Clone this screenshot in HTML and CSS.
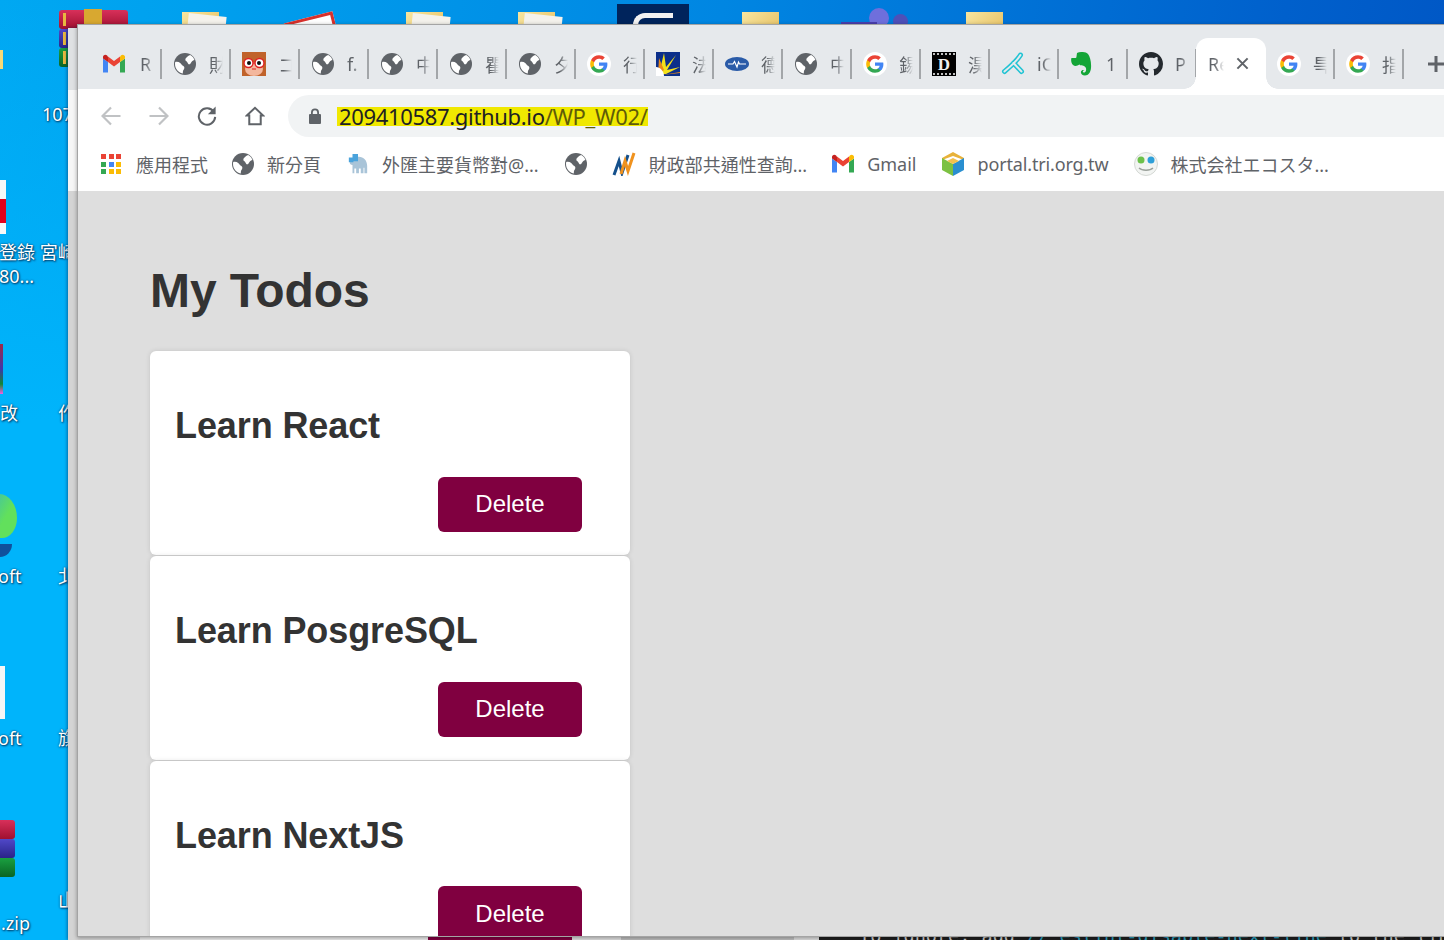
FILE: index.html
```html
<!DOCTYPE html>
<html lang="en">
<head>
    <meta charset="UTF-8">
    <title>React App</title>
    <link rel="stylesheet" href="styles.css">
</head>
<body>

<svg class="sprites" width="0" height="0">
    <symbol id="globe" viewBox="0 0 24 24">
        <circle cx="12" cy="12" r="11" fill="#5f6368"/>
        <path fill="#fff" d="M2.200 10c2-.4 3.800 0 5 1 1.200 1 1.500 2 2.800 2.800 1 .7 1.500 1.200 1.300 2.400-.2 1-1 1.800-1.300 2.800-.2.800-.2 1.500-.1 2.600-2.800-.6-5-2.200-6.500-4.600C2.200 15 1.700 12.500 2.200 10z"/>
        <path fill="#fff" d="M13 6c1-1.300 2.500-2.500 4.200-3.100 2 1.100 3.500 2.800 4.300 5-1.300.2-2.300.9-3 2-.8 1.100-1.100 2.400-2.200 2.400-1.300 0-1.400-1.600-2.200-2.400-.7-.7-1.700-.8-1.700-1.800 0-.8 0-1.300.6-2.100z"/>
    </symbol>
    <symbol id="gmail" viewBox="0 0 24 24">
        <path fill="#4285f4" d="M1 20.500h5V10L1 6.500z"/>
        <path fill="#34a853" d="M18 20.500h5V6.500L18 10z"/>
        <path fill="#ea4335" d="M6 10V4.500l6 4.500 6-4.500V10l-6 4.500z"/>
        <path fill="#fbbc04" d="M18 4.500V10l5-3.500V5c0-2-2.300-3-3.800-1.800z"/>
        <path fill="#c5221f" d="M1 6.500 6 10V4.500L4.800 3.200C3.300 2 1 3 1 5z"/>
    </symbol>
    <symbol id="google" viewBox="0 0 24 24">
        <circle cx="12" cy="12" r="12" fill="#fff"/>
        <path fill="#4285f4" d="M20.400 12.200c0-.6-.1-1.200-.2-1.700H12v3.300h4.700c-.2 1.100-.8 2-1.800 2.600v2.200h2.900c1.700-1.500 2.600-3.800 2.600-6.400z"/>
        <path fill="#34a853" d="M12 20.800c2.400 0 4.400-.8 5.800-2.200l-2.900-2.200c-.8.500-1.800.9-2.900.9-2.300 0-4.200-1.500-4.900-3.600h-3v2.300c1.500 2.900 4.500 4.800 7.900 4.800z"/>
        <path fill="#fbbc05" d="M7.100 13.700c-.4-1.100-.4-2.300 0-3.400V8H4.100c-1.200 2.500-1.200 5.500 0 8z"/>
        <path fill="#ea4335" d="M12 6.700c1.300 0 2.400.4 3.300 1.300l2.500-2.500C16.300 4 14.300 3.200 12 3.200 8.600 3.200 5.600 5.100 4.100 8l3 2.300c.7-2.100 2.600-3.600 4.900-3.600z"/>
    </symbol>
</svg>

<div class="desktop">
    <!-- icons on the desktop, most are hidden by the browser -->
    <div class="rar rar-top"><i class="rar-red"></i><i class="rar-blue"></i><i class="rar-green"></i><b></b></div>
    <div class="folder f1"></div>
    <div class="sheet"></div>
    <div class="folder f2"></div>
    <div class="folder f3"></div>
    <div class="tile"><span></span></div>
    <div class="folder f4"></div>
    <div class="teams"><i class="t-big"></i><i class="t-small"></i><i class="t-body"></i></div>
    <div class="folder f5"></div>
    <div class="sliver-folder"></div>

    <div class="pdf"><i></i></div>
    <div class="thumb"></div>
    <div class="orb"></div>
    <div class="orb-tail"></div>
    <div class="doc"></div>
    <div class="rar rar-low"><i class="rar-red"></i><i class="rar-blue"></i><i class="rar-green"></i></div>

    <span class="label l1">107</span>
    <span class="label l2">登錄 宮崎</span>
    <span class="label l3">80...</span>
    <span class="label l4">改</span>
    <span class="label l5">作</span>
    <span class="label l6">oft</span>
    <span class="label l7">北</span>
    <span class="label l8">oft</span>
    <span class="label l9">旗</span>
    <span class="label l10">.zip</span>
    <span class="label l11">山</span>

    <!-- windows behind the browser -->
    <div class="back-window"></div>
    <div class="back-strip">
        <div class="strip-a"></div>
        <div class="strip-b"></div>
        <div class="strip-c"></div>
        <div class="strip-d"></div>
        <div class="strip-e"></div>
        <div class="strip-term"><code>To ignore, add <em>// eslint-disable-next-line</em> to the line before.</code></div>
    </div>

    <div class="browser">
        <div class="tabs">
            <div class="tab tab-first"><svg class="fav"><use href="#gmail"/></svg><span class="tab-title">R</span></div>
            <div class="tab"><svg class="fav"><use href="#globe"/></svg><span class="tab-title">財</span></div>
            <div class="tab">
                <svg class="fav" viewBox="0 0 24 24">
                    <rect width="24" height="24" fill="#c0622a"/>
                    <ellipse cx="12" cy="17" rx="9" ry="7" fill="#f3b79d"/>
                    <circle cx="6.500" cy="11" r="4.500" fill="#fff" stroke="#e02020" stroke-width="1.400"/>
                    <circle cx="17.500" cy="11" r="4.500" fill="#fff" stroke="#e02020" stroke-width="1.400"/>
                    <circle cx="7" cy="11" r="2" fill="#111"/>
                    <circle cx="17" cy="11" r="2" fill="#111"/>
                    <path d="M11 11h2M10 17h4" stroke="#e02020" stroke-width="1"/>
                </svg>
                <span class="tab-title">コ</span>
            </div>
            <div class="tab"><svg class="fav"><use href="#globe"/></svg><span class="tab-title">f.</span></div>
            <div class="tab"><svg class="fav"><use href="#globe"/></svg><span class="tab-title">中</span></div>
            <div class="tab"><svg class="fav"><use href="#globe"/></svg><span class="tab-title">瞿</span></div>
            <div class="tab"><svg class="fav"><use href="#globe"/></svg><span class="tab-title">夕</span></div>
            <div class="tab"><svg class="fav"><use href="#google"/></svg><span class="tab-title">行</span></div>
            <div class="tab">
                <svg class="fav" viewBox="0 0 24 24">
                    <rect width="24" height="24" fill="#0b2f8a"/>
                    <path fill="#f5e11a" d="M3 22 8 1l2 14L20 3 11 18l13-3-14 7z"/>
                    <path fill="#e8891c" d="M2 23 3 6l5 12zM6 23l18-3v1z"/>
                    <path fill="#fff" d="M0 15c4 0 8 4 8 9H0z"/>
                </svg>
                <span class="tab-title">法</span>
            </div>
            <div class="tab">
                <svg class="fav" viewBox="0 0 24 24">
                    <ellipse cx="12" cy="12" rx="12" ry="7" fill="#2a5ba8"/>
                    <path d="M3 12h5l1.500-2.500L12 15l1.500-5 1 2H21" fill="none" stroke="#fff" stroke-width="1.200"/>
                </svg>
                <span class="tab-title">德</span>
            </div>
            <div class="tab"><svg class="fav"><use href="#globe"/></svg><span class="tab-title">中</span></div>
            <div class="tab"><svg class="fav"><use href="#google"/></svg><span class="tab-title">錫</span></div>
            <div class="tab">
                <svg class="fav" viewBox="0 0 24 24">
                    <rect width="24" height="24" fill="#000"/>
                    <path d="M1 2h22M1 22h22" stroke="#fff" stroke-width="1.500" stroke-dasharray="2 2"/>
                    <text x="12" y="18" class="film-d">D</text>
                </svg>
                <span class="tab-title">淏</span>
            </div>
            <div class="tab">
                <svg class="fav" viewBox="0 0 24 24">
                    <g fill="none" stroke-linecap="round">
                        <path d="M19.500 3C16 9 10 14 3.500 19.500M12.500 11 20.500 19.500" stroke="#1fc3d3" stroke-width="5"/>
                        <path d="M19.500 3C16 9 10 14 3.500 19.500M12.500 11 20.500 19.500" stroke="#e6e9ec" stroke-width="2"/>
                    </g>
                </svg>
                <span class="tab-title">iC</span>
            </div>
            <div class="tab">
                <svg class="fav" viewBox="0 0 24 24">
                    <path fill="#14a537" d="M7 1c3-1.500 9-1.500 11 1 2 2.500 3.500 8 3 14-.3 4-2.500 7.500-6 7.500-3 0-4.500-2-4-4 .4-1.500 2.500-2 3.500-1-1 0-2 .5-1.500 1.500.6 1 2.500.8 3-1.500.4-2 0-3.500-2-4.500-2-.8-3.500-.3-4.500-1.500C6 15 2.500 14 1.500 10.500 1 8.500 1 7 1.500 6H5c1 0 1.500-.5 1.500-1.500z"/>
                </svg>
                <span class="tab-title">1</span>
            </div>
            <div class="tab">
                <svg class="fav" viewBox="0 0 16 16">
                    <path fill="#24292e" d="M8 0C3.580 0 0 3.580 0 8c0 3.540 2.290 6.530 5.470 7.590.4.070.55-.17.550-.38 0-.19-.01-.82-.01-1.490-2.010.370-2.530-.49-2.690-.94-.09-.23-.48-.94-.82-1.130-.28-.15-.68-.52-.01-.53.630-.01 1.080.58 1.230.82.720 1.210 1.870.87 2.330.66.070-.52.280-.87.510-1.070-1.780-.2-3.640-.89-3.640-3.950 0-.87.310-1.590.82-2.150-.08-.2-.36-1.020.08-2.120 0 0 .67-.21 2.200.82.640-.18 1.320-.27 2-.27s1.360.09 2 .27c1.530-1.040 2.200-.82 2.200-.82.440 1.100.16 1.920.08 2.120.51.560.82 1.270.82 2.150 0 3.070-1.870 3.750-3.650 3.950.29.250.54.730.54 1.480 0 1.070-.01 1.930-.01 2.200 0 .21.150.46.550.38A8.013 8.013 0 0 0 16 8c0-4.420-3.580-8-8-8z"/>
                </svg>
                <span class="tab-title">P</span>
            </div>
            <div class="tab tab-active">
                <span class="tab-title">Re</span>
                <svg class="tab-close" viewBox="0 0 14 14"><path d="M1.500 1.500l11 11M12.500 1.500l-11 11"/></svg>
            </div>
            <div class="tab tab-after"><svg class="fav"><use href="#google"/></svg><span class="tab-title">특</span></div>
            <div class="tab"><svg class="fav"><use href="#google"/></svg><span class="tab-title">指</span></div>
            <svg class="new-tab" viewBox="0 0 16 16"><path d="M8 0v16M0 8h16"/></svg>
        </div>

        <div class="toolbar">
            <svg class="nav nav-off" viewBox="0 0 20 20"><path d="M19.500 10H2M10 1.500 1.500 10l8.500 8.500"/></svg>
            <svg class="nav nav-off" viewBox="0 0 20 20"><path d="M.5 10H18M10 1.500l8.500 8.500-8.500 8.500"/></svg>
            <svg class="nav" viewBox="0 0 22 22">
                <path d="M18.500 6.500A9 9 0 1 0 20 12"/>
                <path class="solid" d="M20.500 .5v8.500H12z"/>
            </svg>
            <svg class="nav" viewBox="0 0 20 22"><path d="M1 10.500 10 2l9 8.500h-2.700V20H3.700v-9.500z"/></svg>
            <div class="omnibox">
                <svg class="lock" viewBox="0 0 12 16">
                    <path d="M2 6V4.500a4 4 0 0 1 8 0V6h1a1 1 0 0 1 1 1v8a1 1 0 0 1-1 1H1a1 1 0 0 1-1-1V7a1 1 0 0 1 1-1zm1.800 0h4.400V4.500a2.200 2.200 0 0 0-4.400 0z"/>
                </svg>
                <span class="url"><mark>209410587.github.io<span class="url-path">/WP_W02/</span></mark></span>
            </div>
        </div>

        <div class="bookmarks">
            <div class="bm bm-apps">
                <div class="apps">
                    <i class="r"></i><i class="r"></i><i class="r"></i>
                    <i class="g"></i><i class="b"></i><i class="y"></i>
                    <i class="g"></i><i class="y"></i><i class="y"></i>
                </div>
                <span>應用程式</span>
            </div>
            <div class="bm bm-new"><svg class="fav"><use href="#globe"/></svg><span>新分頁</span></div>
            <div class="bm bm-fx">
                <svg class="fav" viewBox="0 0 24 24">
                    <path fill="#a9c4d8" d="M6 9c0-3 3-5 7-5 5 0 9 4 9 10v8h-3v-6h-1v6h-3v-5h-2v5H10v-5H8v5H6v-9c-2 0-3-1-3-3z"/>
                    <path fill="#4aa3dc" d="M6 1h6v8H6zM2 5h5v5H2z"/>
                </svg>
                <span>外匯主要貨幣對@...</span>
            </div>
            <div class="bm bm-globe"><svg class="fav"><use href="#globe"/></svg></div>
            <div class="bm bm-mof">
                <svg class="fav" viewBox="0 0 24 24">
                    <path d="M2 23 7 9l3 12 6-18" fill="none" stroke="#14508c" stroke-width="3"/>
                    <path d="M9 22 13 9l3 10 6-18" fill="none" stroke="#f0921e" stroke-width="3"/>
                </svg>
                <span>財政部共通性查詢...</span>
            </div>
            <div class="bm bm-gmail"><svg class="fav"><use href="#gmail"/></svg><span>Gmail</span></div>
            <div class="bm bm-portal">
                <svg class="fav" viewBox="0 0 24 24">
                    <path fill="#e8b23a" d="M12 0 23 6v2L12 4 1 8V6z"/>
                    <path fill="#7cc142" d="M1 6l11 6v12L1 18z"/>
                    <path fill="#2a8fd0" d="M23 6 12 12v12l11-6z"/>
                    <path fill="#f2c14e" d="M12 6l6 3-6 3-6-3z"/>
                </svg>
                <span>portal.tri.org.tw</span>
            </div>
            <div class="bm bm-eco">
                <svg class="fav" viewBox="0 0 24 24">
                    <circle cx="12" cy="12" r="11.500" fill="#f2f4f2" stroke="#d4d8d4"/>
                    <circle cx="7" cy="8" r="3.500" fill="#6cc04a"/>
                    <circle cx="17" cy="8" r="3.500" fill="#2e9fd8"/>
                    <path d="M5 16c3 3 11 3 14 0" fill="none" stroke="#9aa09a" stroke-width="1.400"/>
                </svg>
                <span>株式会社エコスタ...</span>
            </div>
        </div>

        <div class="page">
            <h1>My Todos</h1>
            <div class="todo">
                <h2>Learn React</h2>
                <div class="todo-actions"><button class="btn">Delete</button></div>
            </div>
            <div class="todo">
                <h2>Learn PosgreSQL</h2>
                <div class="todo-actions"><button class="btn">Delete</button></div>
            </div>
            <div class="todo">
                <h2>Learn NextJS</h2>
                <div class="todo-actions"><button class="btn">Delete</button></div>
            </div>
        </div>
    </div>
</div>

</body>
</html>
```

FILE: styles.css
```css
* {
    box-sizing: border-box;
}
html, body {
    margin: 0;
    height: 100%;
    overflow: hidden;
}
body {
    font-family: "Noto Sans", "Noto Sans CJK TC", sans-serif;
}
.sprites {
    position: absolute;
}

/* desktop */
.desktop {
    position: relative;
    width: 1444px;
    height: 940px;
    overflow: hidden;
    background: linear-gradient(100deg, #00a8f2 0%, #00a0ee 12%, #0086e2 45%, #0060cc 80%, #0050c0 100%);
}
.desktop::before {
    content: "";
    position: absolute;
    left: 0;
    top: 0;
    width: 70px;
    bottom: 0;
    background: linear-gradient(rgba(0, 180, 251, 0), #00b4fb 420px);
}
.label {
    position: absolute;
    color: #fff;
    font-size: 18px;
    line-height: 24px;
    white-space: nowrap;
    text-shadow: 1px 1px 2px #003a66, 0 0 2px #003a66;
}
.l1 { left: 42px; top: 102px; }
.l2 { left: -1px; top: 240px; }
.l3 { left: -1px; top: 264px; }
.l4 { left: 0; top: 401px; }
.l5 { left: 58px; top: 401px; }
.l6 { left: -2px; top: 564px; }
.l7 { left: 58px; top: 564px; }
.l8 { left: -2px; top: 726px; }
.l9 { left: 58px; top: 726px; }
.l10 { left: 1px; top: 911px; }
.l11 { left: 58px; top: 888px; }

.rar {
    position: absolute;
    display: flex;
    flex-direction: column;
}
.rar i {
    display: block;
    height: 19px;
    border-radius: 3px;
}
.rar-red { background: linear-gradient(#d8305a, #a01030); }
.rar-blue { background: linear-gradient(#5048c8, #2a2488); }
.rar-green { background: linear-gradient(#1aa040, #0a6424); }
.rar-top {
    left: 59px;
    top: 10px;
    width: 69px;
}
.rar-top i::before {
    content: "";
    display: block;
    width: 3px;
    height: 13px;
    margin: 3px 0 0 4px;
    background: #e8b840;
}
.rar-top b {
    position: absolute;
    left: 25px;
    top: -1px;
    width: 18px;
    height: 16px;
    background: #d8a830;
}
.rar-low {
    left: -8px;
    top: 820px;
    width: 23px;
}
.folder {
    position: absolute;
    top: 12px;
    width: 37px;
    height: 16px;
    background: linear-gradient(135deg, #f8e6a0, #e8c468);
}
.f1 { left: 182px; }
.f2 { left: 406px; }
.f3 { left: 518px; }
.f4 { left: 742px; }
.f5 { left: 966px; }
.folder::after {
    content: "";
    position: absolute;
    left: 6px;
    top: 3px;
    width: 38px;
    height: 14px;
    background: #f4f2ec;
    transform: rotate(6deg);
}
.f4::after, .f5::after {
    display: none;
}
.sheet {
    position: absolute;
    left: 286px;
    top: 17px;
    width: 50px;
    height: 24px;
    background: #fff;
    border: 3px solid #d8302c;
    transform: rotate(-14deg);
}
.tile {
    position: absolute;
    left: 617px;
    top: 4px;
    width: 72px;
    height: 24px;
    background: #00245c;
}
.tile span {
    position: absolute;
    left: 16px;
    top: 9px;
    width: 40px;
    height: 24px;
    border: 5px solid #f2f2f2;
    border-right: 0;
    border-radius: 16px 0 0 16px;
}
.teams i {
    position: absolute;
    display: block;
}
.t-big {
    left: 869px;
    top: 8px;
    width: 20px;
    height: 20px;
    border-radius: 50%;
    background: #6f6fdc;
}
.t-small {
    left: 893px;
    top: 14px;
    width: 15px;
    height: 15px;
    border-radius: 50%;
    background: #4e50b8;
}
.t-body {
    left: 841px;
    top: 22px;
    width: 36px;
    height: 6px;
    background: #4a3fae;
}
.sliver-folder {
    position: absolute;
    left: 0;
    top: 50px;
    width: 3px;
    height: 19px;
    background: #f6d978;
}
.pdf {
    position: absolute;
    left: 0;
    top: 180px;
    width: 6px;
    height: 54px;
    background: #f8f8f8;
}
.pdf i {
    display: block;
    margin-top: 19px;
    height: 24px;
    background: #e4001c;
}
.thumb {
    position: absolute;
    left: 0;
    top: 344px;
    width: 3px;
    height: 50px;
    background: linear-gradient(#a02848, #4038a8 50%, #108838 80%, #f060e0);
}
.orb {
    position: absolute;
    left: -16px;
    top: 494px;
    width: 33px;
    height: 44px;
    border-radius: 50% 60% 50% 50%;
    background: linear-gradient(120deg, #35b8c0, #62e05c 60%);
}
.orb-tail {
    position: absolute;
    left: 0;
    top: 544px;
    width: 12px;
    height: 13px;
    border-radius: 0 0 100% 0;
    background: #10509c;
}
.doc {
    position: absolute;
    left: 0;
    top: 666px;
    width: 5px;
    height: 53px;
    background: #f6f6f6;
}

/* windows behind the browser */
.back-window {
    position: absolute;
    left: 68px;
    top: 28px;
    width: 80px;
    bottom: 0;
    background: linear-gradient(#dfe1e3 0, #dfe1e3 62px, #f6f6f6 62px, #f6f6f6 163px, #d4d4d4 163px);
    box-shadow: -1px 0 3px rgba(0, 40, 90, 0.5);
}
.back-strip {
    position: absolute;
    left: 140px;
    right: 0;
    bottom: 0;
    height: 4px;
    display: flex;
}
.strip-a { width: 288px; background: #ececec; }
.strip-b { width: 144px; background: #800040; }
.strip-c { width: 49px; background: #dedede; }
.strip-d { width: 173px; background: #bcbcbc; }
.strip-e { width: 25px; background: #dcdcdc; }
.strip-term {
    flex: 1;
    background: #1e1e1e;
    overflow: hidden;
    position: relative;
}
.strip-term code {
    position: absolute;
    left: 40px;
    top: -10px;
    color: #cccccc;
    font-family: "DejaVu Sans Mono", monospace;
    font-size: 18.500px;
    line-height: 20px;
    white-space: nowrap;
}
.strip-term em {
    font-style: normal;
    color: #2aa0c0;
}

/* browser */
.browser {
    position: absolute;
    left: 77px;
    top: 24px;
    width: 1400px;
    height: 913px;
    display: flex;
    flex-direction: column;
    border: 1px solid #a4a4a4;
    background: #fff;
    box-shadow: 0 1px 4px rgba(0, 0, 0, 0.35);
}
.tabs {
    height: 64px;
    flex: none;
    padding: 13px 0 0 14px;
    display: flex;
    align-items: stretch;
    background: #e6e9ec;
}
.tab {
    position: relative;
    flex: none;
    width: 69px;
    display: flex;
    align-items: center;
    padding-left: 12px;
    gap: 12px;
    color: #5f6368;
    font-size: 18px;
}
.tab::after {
    content: "";
    position: absolute;
    right: -1px;
    top: 11px;
    width: 2px;
    height: 30px;
    background: #a3a6a9;
}
.fav {
    flex: none;
    width: 24px;
    height: 24px;
}
.tab-first .fav {
    margin: 0 2px 0 -2px;
}
.tab-title {
    width: 14px;
    overflow: hidden;
    white-space: nowrap;
    -webkit-mask-image: linear-gradient(90deg, #000 40%, transparent);
    mask-image: linear-gradient(90deg, #000 40%, transparent);
}
.film-d {
    fill: #eee;
    font-family: "Liberation Serif", serif;
    font-weight: bold;
    font-size: 17px;
    text-anchor: middle;
}
.tab-active {
    width: 70px;
    background: #fff;
    border-radius: 12px 12px 0 0;
}
.tab-active .tab-title {
    width: 16px;
}
.tab-active::before {
    content: "";
    position: absolute;
    left: -12px;
    bottom: 0;
    width: 12px;
    height: 12px;
    background: radial-gradient(circle at 0 0, #e6e9ec 11.500px, #fff 12px);
}
.tab-active::after {
    right: -12px;
    top: auto;
    bottom: 0;
    width: 12px;
    height: 12px;
    background: radial-gradient(circle at 100% 0, #e6e9ec 11.500px, #fff 12px);
}
.tab-close {
    flex: none;
    width: 13px;
    height: 13px;
    fill: none;
    stroke: #5f6368;
    stroke-width: 2.200;
}
.tab-after {
    width: 68px;
    padding-left: 11px;
}
.new-tab {
    flex: none;
    align-self: center;
    width: 16px;
    height: 16px;
    margin-left: 25px;
    fill: none;
    stroke: #5f6368;
    stroke-width: 3;
}

.toolbar {
    height: 48px;
    flex: none;
    display: flex;
    align-items: flex-start;
    background: #fff;
    padding-left: 23px;
}
.nav {
    flex: none;
    width: 20px;
    height: 20px;
    margin: 17px 28px 0 0;
    fill: none;
    stroke: #5f6368;
    stroke-width: 2.200;
}
.nav-off {
    stroke: #c0c2c4;
}
.nav .solid {
    fill: #5f6368;
    stroke: none;
}
.omnibox {
    flex: 1;
    height: 42px;
    margin: 6px 0 0 -5px;
    padding-left: 21px;
    display: flex;
    align-items: center;
    gap: 16px;
    background: #f1f3f4;
    border-radius: 21px 0 0 21px;
}
.lock {
    flex: none;
    width: 12px;
    height: 16px;
    fill: #5f6368;
}
.url {
    font-size: 22px;
    line-height: 24px;
    color: #202124;
    white-space: nowrap;
    letter-spacing: -0.330px;
}
.url mark {
    display: inline-block;
    height: 19px;
    line-height: 19px;
    padding-left: 2px;
    color: #202124;
    background: #f0e800;
}
.url-path {
    color: #5f5c08;
}

.bookmarks {
    height: 54px;
    flex: none;
    display: flex;
    align-items: center;
    padding-left: 23px;
    background: #fff;
    color: #5f6368;
    font-size: 18px;
    white-space: nowrap;
}
.bm {
    display: flex;
    align-items: center;
    gap: 12px;
    flex: none;
}
.bm-apps { gap: 15px; margin-right: 23px; }
.bm-new { margin-right: 26px; }
.bm-fx { gap: 13px; margin-right: 25px; }
.bm-globe { margin-right: 24px; }
.bm-mof { gap: 13px; margin-right: 24px; }
.bm-gmail { margin-right: 25px; }
.bm-portal { margin-right: 26px; letter-spacing: -0.150px; }
.bm-fx .fav {
    width: 22px;
    height: 22px;
}
.apps {
    width: 20px;
    height: 20px;
    display: grid;
    grid-template-columns: repeat(3, 5px);
    grid-auto-rows: 5px;
    gap: 2.500px;
}
.apps i {
    display: block;
}
.apps .r { background: #ea4335; }
.apps .g { background: #34a853; }
.apps .b { background: #4285f4; }
.apps .y { background: #fbbc05; }

/* the todo page */
.page {
    flex: 1;
    min-height: 0;
    overflow: hidden;
    background: #dedede;
    padding: 0.2px 0 0 72px;
    font-family: "Liberation Sans", Arial, sans-serif;
    color: #333;
}
.page h1 {
    margin: 72px 0 32px;
    font-size: 48px;
    line-height: 56px;
    font-weight: bold;
    letter-spacing: -0.100px;
}
.todo {
    width: 480px;
    height: 203.800px;
    margin-bottom: 1px;
    padding: 50px 48px 0 25px;
    background: #fff;
    border-radius: 6px;
    box-shadow: 0 0 5px rgba(0, 0, 0, 0.12);
}
.todo h2 {
    margin: 0 0 25.600px;
    font-size: 36px;
    line-height: 50px;
    font-weight: bold;
    letter-spacing: -0.100px;
}
.todo-actions {
    display: flex;
    justify-content: flex-end;
}
.btn {
    width: 144px;
    height: 55px;
    border: none;
    border-radius: 6px;
    background: #800040;
    color: #fff;
    font-family: inherit;
    font-size: 24px;
    cursor: pointer;
}
```
